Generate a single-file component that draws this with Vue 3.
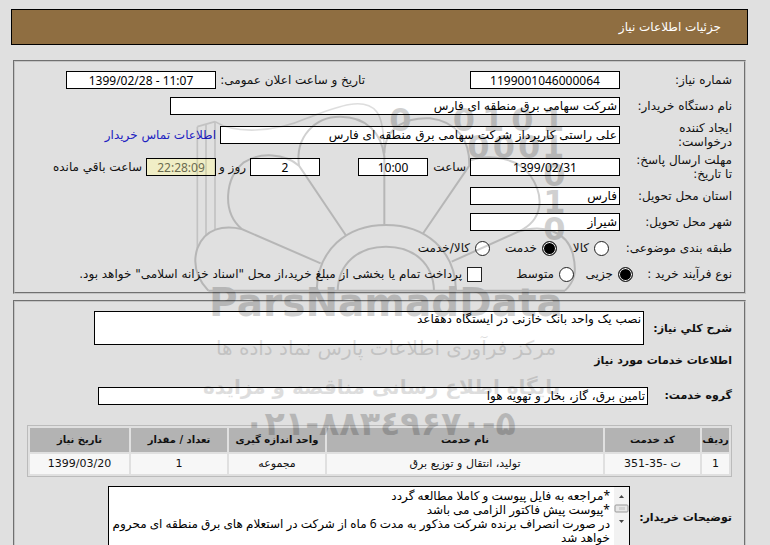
<script setup>
import { ref } from 'vue'

const subject = ref('service')
const process = ref('small')
const treasury = ref(false)

const subjects = [
  { value: 'goods', text: 'کالا' },
  { value: 'service', text: 'خدمت' },
  { value: 'both', text: 'کالا/خدمت' },
]
const processes = [
  { value: 'small', text: 'جزیی' },
  { value: 'medium', text: 'متوسط' },
]
const services = [
  { row: '1', code: 'ت -35-351', name: 'تولید، انتقال و توزیع برق', unit: 'مجموعه', count: '1', date: '1399/03/20' },
]
const description = 'نصب یک واحد بانک خازنی در ایستگاه دهقاعد'
const notes = [
  '*مراجعه به فایل پیوست و کاملا مطالعه گردد',
  '*پیوست پیش فاکتور الزامی می باشد',
  'در صورت انصراف برنده شرکت مذکور به مدت 6 ماه از شرکت در استعلام های برق منطقه ای محروم',
  'خواهد شد',
].join('\n')

// Binary digits scattered around the emblem: [digit, x, baseline]
const bits = [
  ['0', 598, 122], ['0', 788, 122], ['1', 876, 122], ['0', 964, 122], ['1', 1056, 122],
  ['0', 832, 204], ['0', 908, 204], ['0', 984, 204], ['1', 1056, 204],
  ['0', 1060, 288], ['1', 1060, 369], ['0', 1060, 450],
]
</script>

<template>
  <main class="page" dir="rtl">
    <header class="title"><h1>جزئیات اطلاعات نیاز</h1></header>

    <section class="panel">
      <div class="row">
        <label class="name" for="need-no">شماره نیاز:</label>
        <input id="need-no" class="field medium num" value="1199001046000064" readonly />
        <label class="announce" for="announce">تاریخ و ساعت اعلان عمومی:</label>
        <input id="announce" class="field medium num" value="1399/02/28 - 11:07" dir="ltr" readonly />
      </div>
      <div class="row">
        <label class="name" for="buyer">نام دستگاه خریدار:</label>
        <input id="buyer" class="field wide" value="شرکت سهامی برق منطقه ای فارس" readonly />
      </div>
      <div class="row tall">
        <label class="name" for="creator">ایجاد کننده<br />درخواست:</label>
        <input id="creator" class="field large" value="علی راستی کارپرداز شرکت سهامی برق منطقه ای فارس" readonly />
        <a class="contact" href="#contact">اطلاعات تماس خریدار</a>
      </div>
      <div class="row tall">
        <label class="name" for="deadline">مهلت ارسال پاسخ:<br />تا تاریخ:</label>
        <input id="deadline" class="field medium num" value="1399/02/31" readonly />
        <label class="hour" for="hour">ساعت</label>
        <input id="hour" class="field small num" value="10:00" readonly />
        <input id="days" class="field small num days" value="2" readonly />
        <label class="and" for="days">روز و</label>
        <input id="remain" class="field small num remain" value="22:28:09" readonly />
        <label class="left" for="remain">ساعت باقي مانده</label>
      </div>
      <div class="row">
        <label class="name" for="province">استان محل تحویل:</label>
        <input id="province" class="field medium" value="فارس" readonly />
      </div>
      <div class="row">
        <label class="name" for="city">شهر محل تحویل:</label>
        <input id="city" class="field medium" value="شیراز" readonly />
      </div>
      <div class="row" role="radiogroup" aria-labelledby="subject-label">
        <span id="subject-label" class="name subject">طبقه بندی موضوعی:</span>
        <label v-for="s in subjects" :key="s.value" class="option" :class="s.value">
          <input v-model="subject" type="radio" name="subject" :value="s.value" />{{ s.text }}
        </label>
      </div>
      <div class="row" role="radiogroup" aria-labelledby="process-label">
        <span id="process-label" class="name process">نوع فرآیند خرید :</span>
        <label v-for="p in processes" :key="p.value" class="option" :class="p.value">
          <input v-model="process" type="radio" name="process" :value="p.value" />{{ p.text }}
        </label>
        <label class="option">
          <input v-model="treasury" type="checkbox" />پرداخت تمام یا بخشی از مبلغ خرید،از محل "اسناد خزانه اسلامی" خواهد بود.
        </label>
      </div>
    </section>

    <section class="panel details">
      <div class="row block">
        <label class="strong about" for="about">شرح کلي نیاز:</label>
        <textarea id="about" class="field area" :value="description" readonly></textarea>
      </div>
      <h2 class="strong heading">اطلاعات خدمات مورد نیاز</h2>
      <div class="row">
        <label class="strong group" for="group">گروه خدمت:</label>
        <input id="group" class="field full" value="تامین برق، گاز، بخار و تهویه هوا" readonly />
      </div>
      <table class="services">
        <thead>
          <tr>
            <th class="c-row">ردیف</th>
            <th class="c-code">کد خدمت</th>
            <th>نام خدمت</th>
            <th class="c-unit">واحد اندازه گیری</th>
            <th class="c-unit">تعداد / مقدار</th>
            <th class="c-date">تاریخ نیاز</th>
          </tr>
        </thead>
        <tbody>
          <tr v-for="s in services" :key="s.row">
            <td>{{ s.row }}</td>
            <td>{{ s.code }}</td>
            <td>{{ s.name }}</td>
            <td>{{ s.unit }}</td>
            <td>{{ s.count }}</td>
            <td>{{ s.date }}</td>
          </tr>
        </tbody>
      </table>
      <div class="row block">
        <label class="strong remarks" for="notes">توضیحات خریدار:</label>
        <div class="field notes">
          <div class="scroll" aria-hidden="true">
            <svg viewBox="0 0 15 60" width="15" height="60">
              <path d="M5 11h5L7.5 8z" fill="#444" />
              <rect x="1" y="18" width="13" height="7" rx="1" fill="#e6e6e6" stroke="#999" />
              <path d="M6 20v3M8 20v3M10 20v3" stroke="#bbb" />
              <path d="M5 33h5L7.5 36z" fill="#444" />
            </svg>
          </div>
          <textarea id="notes" :value="notes" readonly></textarea>
        </div>
      </div>
    </section>

    <svg class="mark" viewBox="0 0 1200 1080" aria-hidden="true">
      <g fill="none" stroke="#000" stroke-width="6">
        <path d="M55 602H1125" />
        <path d="M380 602C382 480 470 405 588 405S796 480 798 602" />
        <path d="M443 602C445 520 505 470 588 470S730 520 732 602" />
        <path d="M55 602C20 565 8 520 22 475C45 415 100 405 155 417L392 520" />
        <path d="M155 417C95 365 105 265 160 218C210 185 285 190 327 227L467 435" />
        <path d="M327 227C315 140 375 80 450 80C530 80 575 130 583 200V405" />
        <path d="M583 190C585 110 650 82 720 85C800 95 840 150 838 227L698 432" />
        <path d="M838 212C900 190 985 205 1020 255C1065 320 1060 390 985 425L785 515" />
        <path d="M985 425C1060 400 1130 425 1148 490C1163 550 1152 575 1125 602" />
      </g>
      <g fill="none" stroke="#000" stroke-width="5" opacity=".7">
        <path d="M75 95C130 130 250 130 350 85C430 55 520 15 560 65C580 90 583 150 583 200" />
        <path d="M75 95V417M48 103V438M22 110V475M22 110L75 95" />
      </g>
      <g class="bits">
        <text v-for="([digit, x, y], i) in bits" :key="i" :x="x" :y="y">{{ digit }}</text>
      </g>
      <text class="brand" x="588" y="677">ParsNamadData</text>
      <text class="script" x="588" y="795">مرکز فرآوری اطلاعات پارس نماد داده ها</text>
      <text class="portal" x="575" y="912">پایگاه اطلاع رسانی مناقصه و مزایده</text>
      <text class="phone" x="570" y="1035">۰۲۱-۸۸۳٤۹۶۷۰-۵</text>
    </svg>
  </main>
</template>

<style>
html, body { background: #e0e0e0; }
</style>

<style scoped>
.page, .page * { box-sizing: border-box; }
.page {
  position: relative;
  height: 100vh;
  overflow: hidden;
  padding: 9px 22px 0 11px;
  color: #111;
  font: 12px/14px "DejaVu Sans", sans-serif;
}
input, textarea { font: inherit; color: #000; margin: 0; }
.title {
  display: flex;
  align-items: center;
  height: 36px;
  padding: 0 26px;
  background: #8f6e41;
  border: 1px solid #000;
  color: #fff;
}
.title h1 { margin: 0; font-size: 12px; font-weight: 400; }
.panel {
  margin: 15px 2px 0;
  padding: 5px 12px;
  border: 2px groove #c4c4c4;
}
.row { display: flex; align-items: center; min-height: 26px; white-space: nowrap; }
.tall { min-height: 32px; }
.name { flex: none; width: 112px; }
.subject { width: 123px; }
.process { width: 99px; }
.field { flex: none; height: 18px; padding: 0 2px; background: #fff; border: 1px solid #000; border-radius: 0; outline: 0; }
.num { font-family: "Noto Sans", "DejaVu Sans", sans-serif; text-align: center; }
.medium { width: 150px; }
.small { width: 70px; }
.large { width: 400px; }
.wide { width: 450px; }
.announce { width: 149px; margin-right: 105px; }
.contact { margin-right: 4px; color: #2020c0; text-decoration: none; }
.hour { width: 42px; padding-right: 4px; }
.days { margin-right: 38px; }
.and { width: 34px; padding-right: 4px; }
.remain { background: #f0eec6; color: #6b6b50; }
.left { padding-right: 4px; }
.option { display: flex; align-items: center; gap: 5px; }
.goods { width: 52px; }
.service { width: 67px; }
.small.option { width: 59px; }
.medium.option { width: 92px; }
.option input { appearance: none; flex: none; width: 15px; height: 15px; background: #fff; border: 1px solid #222; }
.option input[type="radio"] { border-radius: 50%; }
.option input[type="radio"]:checked { background: #000; box-shadow: inset 0 0 0 1px #fff; }
.details { margin-top: 6px; padding-top: 9px; height: 300px; }
.strong { flex: none; font-size: 11px; font-weight: 700; }
.block { align-items: flex-start; }
.about { width: 88px; padding-top: 11px; }
.area { width: 550px; height: 34px; resize: none; overflow: hidden; }
.heading { margin: 9px 0 15px; }
.group { width: 84px; }
.full { width: 550px; }
.services {
  width: 100%;
  margin: 16px 0 9px;
  table-layout: fixed;
  border: 1px solid #bbb;
  border-spacing: 2px;
  font-size: 11px;
  text-align: center;
}
.services th { height: 24px; padding: 0; background: #b3b3b3; font-size: 10px; }
.services td { height: 20px; padding: 0; background: #f7f7f7; }
.c-row { width: 27px; }
.c-code { width: 95px; }
.c-unit { width: 96px; }
.c-date { width: 99px; }
.remarks { width: 102px; padding-top: 25px; }
.notes { display: flex; width: 522px; height: 80px; padding: 0; }
.scroll { width: 15px; background: #f2f2f2; }
.notes textarea {
  flex: 1;
  padding: 2px 4px;
  border: 0;
  outline: 0;
  resize: none;
  overflow: hidden;
  background: #fff;
  font-family: "Noto Sans", "DejaVu Sans", sans-serif;
  white-space: pre;
}
.mark {
  position: absolute;
  top: 90px;
  left: 50%;
  width: 400px;
  height: 360px;
  margin-left: -195px;
  opacity: .18;
  pointer-events: none;
}
.mark text { font-family: "DejaVu Sans", sans-serif; text-anchor: middle; }
.mark .bits text { font-size: 96px; font-weight: 700; text-anchor: start; direction: ltr; }
.mark .brand { font-size: 117px; font-weight: 700; direction: ltr; }
.mark .script { font-size: 60px; opacity: .7; }
.mark .portal { font-size: 60px; font-weight: 700; opacity: .7; }
.mark .phone { font-size: 100px; font-weight: 700; direction: ltr; unicode-bidi: bidi-override; }
</style>
